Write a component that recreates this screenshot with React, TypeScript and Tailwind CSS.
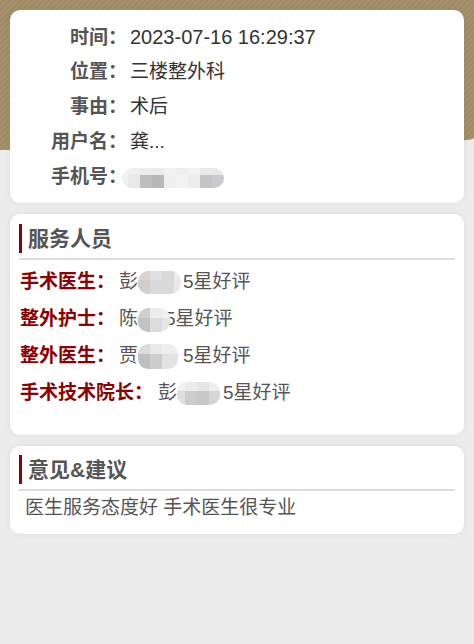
import React from "react";

type Cell = { w: number; top: string; bottom: string };

const Mosaic = ({ cells, h, topH, className = "" }: { cells: Cell[]; h: number; topH: number; className?: string }) => (
  <span
    className={`relative z-10 inline-flex overflow-hidden rounded-[10px] align-middle ${className}`}
    style={{ height: h }}
  >
    {cells.map((c, i) => (
      <span key={i} className="flex flex-col" style={{ width: c.w }}>
        <span style={{ height: topH, background: c.top }} />
        <span className="flex-1" style={{ background: c.bottom }} />
      </span>
    ))}
  </span>
);

const infoRows = [
  { label: "时间：", value: "2023-07-16 16:29:37", size: "text-[20px]" },
  { label: "位置：", value: "三楼整外科", size: "" },
  { label: "事由：", value: "术后", size: "" },
  { label: "用户名：", value: "龚...", size: "" },
];

const phoneCells: Cell[] = [
  { w: 6, top: "#f4f4f4", bottom: "#f0f0f0" },
  { w: 12, top: "#efefef", bottom: "#e8e8e8" },
  { w: 12, top: "#ececec", bottom: "#bebebe" },
  { w: 12, top: "#ebebeb", bottom: "#b8b8b8" },
  { w: 12, top: "#f1f1f1", bottom: "#efefef" },
  { w: 12, top: "#eeeeee", bottom: "#f3f3f3" },
  { w: 12, top: "#f2f2f2", bottom: "#ededed" },
  { w: 12, top: "#e9e9e9", bottom: "#c6c4c4" },
  { w: 12, top: "#e6e8ea", bottom: "#c8cacd" },
];

const SectionTitle = ({ children }: { children: React.ReactNode }) => (
  <>
    <div className="border-l-[3px] border-[#8b0000] pl-[6px] text-[21px] font-bold leading-[29px] text-[#555]">
      {children}
    </div>
    <div className="mt-[5px] h-[2px] bg-[#dddddd]" />
  </>
);

export default function App() {
  return (
    <div className="relative min-h-[644px] bg-[#ececec] font-['Liberation_Sans','Noto_Sans_CJK_SC',sans-serif]">
      {/* header background */}
      <div className="absolute inset-x-0 top-0 h-[150px] rounded-br-[474px_12px] bg-[repeating-linear-gradient(135deg,#a5926d_0px,#a5926d_2px,#9f8c67_2px,#9f8c67_4px)]" />

      <div className="relative px-[10px] pt-[10px]">
        {/* info card */}
        <div className="rounded-[10px] bg-white pt-[10px] pb-[8px] shadow-[0_0_6px_rgba(0,0,0,0.06)]">
          {infoRows.map((r) => (
            <div key={r.label} className="flex h-[35px] items-baseline pt-[4px] text-[19px] leading-[26px]">
              <span className="w-[117px] text-right font-bold text-[#555]">{r.label}</span>
              <span className={`ml-[3px] text-[#333] ${r.size}`}>{r.value}</span>
            </div>
          ))}
          <div className="flex h-[35px] items-center text-[19px]">
            <span className="w-[117px] text-right font-bold text-[#555]">手机号：</span>
            <Mosaic cells={phoneCells} h={20} topH={7} className="ml-[-5px]" />
          </div>
        </div>

        {/* staff card */}
        <div className="mt-[11px] rounded-[10px] bg-white px-[9px] pt-[10px] pb-[23px] shadow-[0_0_6px_rgba(0,0,0,0.06)]">
          <SectionTitle>服务人员</SectionTitle>
          <div className="mt-[4px] text-[19px]">
            <div className="flex h-[37px] items-center">
              <span className="w-[100px] pl-[1px] font-bold text-[#8b0000]">手术医生：</span>
              <span className="text-[#555]">彭</span>
              <Mosaic
                h={23}
                topH={9}
                cells={[
                  { w: 12, top: "#d8d4d3", bottom: "#d2cecd" },
                  { w: 12, top: "#e0e0e3", bottom: "#d9d9dc" },
                  { w: 12, top: "#d9d8da", bottom: "#dadada" },
                  { w: 7, top: "#eeeaea", bottom: "#ebe8e8" },
                ]}
              />
              <span className="ml-[2px] text-[#555]">5星好评</span>
            </div>
            <div className="flex h-[37px] items-center">
              <span className="w-[100px] pl-[1px] font-bold text-[#8b0000]">整外护士：</span>
              <span className="text-[#555]">陈</span>
              <Mosaic
                h={24}
                topH={10}
                cells={[
                  { w: 12, top: "#cfcfcf", bottom: "#c2c2c2" },
                  { w: 12, top: "#ececec", bottom: "#dcdcdc" },
                  { w: 8, top: "#f0f0f0", bottom: "#e6e6e6" },
                ]}
              />
              <span className="ml-[-5px] text-[#555]">5星好评</span>
            </div>
            <div className="flex h-[37px] items-center">
              <span className="w-[100px] pl-[1px] font-bold text-[#8b0000]">整外医生：</span>
              <span className="text-[#555]">贾</span>
              <Mosaic
                h={25}
                topH={10}
                cells={[
                  { w: 12, top: "#dcdcdc", bottom: "#c0bebe" },
                  { w: 12, top: "#e8e8e8", bottom: "#cdcdcd" },
                  { w: 16, top: "#eeeeee", bottom: "#e2e2e2" },
                ]}
              />
              <span className="ml-[5px] text-[#555]">5星好评</span>
            </div>
            <div className="flex h-[37px] items-center">
              <span className="w-[139px] pl-[1px] font-bold text-[#8b0000]">手术技术院长：</span>
              <span className="text-[#555]">彭</span>
              <Mosaic
                h={23}
                topH={9}
                cells={[
                  { w: 8, top: "#f0f0f0", bottom: "#dedede" },
                  { w: 12, top: "#ececec", bottom: "#cccccc" },
                  { w: 12, top: "#e6e6e6", bottom: "#c9c7c7" },
                  { w: 11, top: "#eeeeee", bottom: "#d6d4d4" },
                ]}
              />
              <span className="ml-[3px] text-[#555]">5星好评</span>
            </div>
          </div>
        </div>

        {/* feedback card */}
        <div className="mt-[11px] rounded-[10px] bg-white px-[9px] pt-[9px] pb-[9px] shadow-[0_0_6px_rgba(0,0,0,0.06)]">
          <SectionTitle>意见&amp;建议</SectionTitle>
          <div className="pl-[6px] text-[19px] leading-[34px] text-[#555]">医生服务态度好 手术医生很专业</div>
        </div>
      </div>
    </div>
  );
}
